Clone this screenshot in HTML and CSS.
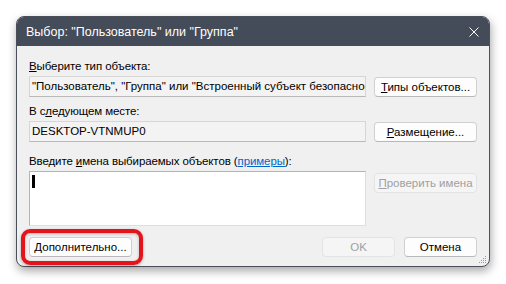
FILE: index.html
```html
<!DOCTYPE html>
<html lang="ru">
<head>
    <meta charset="UTF-8">
    <title>Выбор: "Пользователь" или "Группа"</title>
    <link rel="stylesheet" href="styles.css">
</head>
<body>
    <div class="dialog">
        <div class="titlebar">
            <span class="title">Выбор: "Пользователь" или "Группа"</span>
            <svg class="close" width="10" height="10" viewBox="0 0 10 10">
                <path d="M0.5 0.5 L9.5 9.5 M9.5 0.5 L0.5 9.5" stroke="#ffffff" stroke-width="1" fill="none"/>
            </svg>
        </div>

        <div class="content">
            <div class="label"><u>В</u>ыберите тип объекта:</div>
            <div class="row">
                <div class="field">"Пользователь", "Группа" или "Встроенный субъект безопасности"</div>
                <button class="btn"><u>Т</u>ипы объектов...</button>
            </div>

            <div class="label gap-small">В с<u>л</u>едующем месте:</div>
            <div class="row">
                <div class="field">DESKTOP-VTNMUP0</div>
                <button class="btn"><u>Р</u>азмещение...</button>
            </div>

            <div class="label gap-big">Введите <u>и</u>мена выбираемых объектов (<a href="#" class="link">примеры</a>):</div>
            <div class="row row-top">
                <div class="names"><span class="caret"></span></div>
                <button class="btn btn-check" disabled><u>П</u>роверить имена</button>
            </div>

            <div class="footer">
                <button class="btn btn-more"><u>Д</u>ополнительно...</button>
                <div class="footer-right">
                    <button class="btn btn-ok" disabled>OK</button>
                    <button class="btn btn-cancel">Отмена</button>
                </div>
            </div>
        </div>

        <svg class="grip" width="8" height="8" viewBox="0 0 8 8">
            <rect x="6" y="0" width="1" height="1" fill="#9a9a9a"/>
            <rect x="4" y="2" width="1" height="1" fill="#9a9a9a"/>
            <rect x="6" y="2" width="1" height="1" fill="#9a9a9a"/>
            <rect x="2" y="4" width="1" height="1" fill="#9a9a9a"/>
            <rect x="4" y="4" width="1" height="1" fill="#9a9a9a"/>
            <rect x="6" y="4" width="1" height="1" fill="#9a9a9a"/>
            <rect x="0" y="6" width="1" height="1" fill="#9a9a9a"/>
            <rect x="2" y="6" width="1" height="1" fill="#9a9a9a"/>
            <rect x="4" y="6" width="1" height="1" fill="#9a9a9a"/>
            <rect x="6" y="6" width="1" height="1" fill="#9a9a9a"/>
        </svg>
    </div>

    <!-- highlight around the "more" button -->
    <div class="highlight"></div>
</body>
</html>
```

FILE: styles.css
```css
body {
    margin: 0;
    width: 506px;
    height: 284px;
    background-color: #ffffff;
    font-family: 'Liberation Sans', Arial, sans-serif;
    font-size: 11.5px;
    color: #000;
    position: relative;
    overflow: hidden;
}
.dialog {
    position: relative;
    margin: 16px 0 0 16px;
    width: 474px;
    height: 251px;
    box-sizing: border-box;
    border: 1px solid #4a4f5a;
    border-radius: 8px;
    overflow: hidden;
    background-color: #f0f0f0;
    box-shadow: 1px 4px 10px rgba(0,0,0,0.35);
}
.titlebar {
    height: 29px;
    background-color: #444b59;
    color: #fff;
    display: flex;
    align-items: center;
    justify-content: space-between;
    padding: 0 10px 0 9px;
    font-size: 12.5px;
}
.content {
    padding: 10px 12px 0 12px;
}
.label {
    height: 20px;
    line-height: 20px;
    white-space: nowrap;
    letter-spacing: -0.1px;
}
.gap-small {
    margin-top: 4px;
}
.gap-big {
    margin-top: 9px;
}
.row {
    display: flex;
    gap: 8px;
    align-items: center;
}
.row-top {
    align-items: flex-start;
}
.field {
    width: 337px;
    height: 21px;
    box-sizing: border-box;
    line-height: 19px;
    padding: 0 2px;
    background-color: #f3f3f3;
    border: 1px solid #d6d6d6;
    border-bottom-color: #b9b9b9;
    white-space: nowrap;
    overflow: hidden;
    text-overflow: clip;
}
.names {
    width: 337px;
    height: 55px;
    box-sizing: border-box;
    background-color: #fff;
    border: 1px solid #b4b4b4;
    border-right-color: #dedede;
    border-bottom-color: #dedede;
    padding: 3px 2px;
}
.caret {
    display: block;
    width: 3px;
    height: 13px;
    background-color: #000;
}
.btn {
    width: 103px;
    height: 20px;
    box-sizing: border-box;
    padding: 0;
    font-family: inherit;
    font-size: 11.5px;
    color: #000;
    background-color: #fdfdfd;
    border: 1px solid #d0d0d0;
    border-bottom-color: #b8b8b8;
    border-radius: 4px;
    white-space: nowrap;
}
.btn:disabled {
    color: #a0a0a0;
    background-color: #f5f5f5;
    border-color: #e3e3e3;
}
.btn-check {
    margin-top: 2px;
}
.btn-ok {
    width: 73px;
}
.btn-cancel {
    width: 73px;
}
.footer {
    margin-top: 11px;
    display: flex;
    justify-content: space-between;
}
.footer-right {
    display: flex;
    gap: 9px;
}
.link {
    color: #0066cc;
}
.grip {
    position: absolute;
    right: 2px;
    bottom: 2px;
}
.highlight {
    position: absolute;
    left: 21px;
    top: 229px;
    width: 122px;
    height: 36px;
    box-sizing: border-box;
    border: 4px solid #e3141c;
    border-radius: 9px;
    box-shadow: 0 1px 3px rgba(0,0,0,0.3), inset 0 1px 3px rgba(0,0,0,0.25);
}
```
